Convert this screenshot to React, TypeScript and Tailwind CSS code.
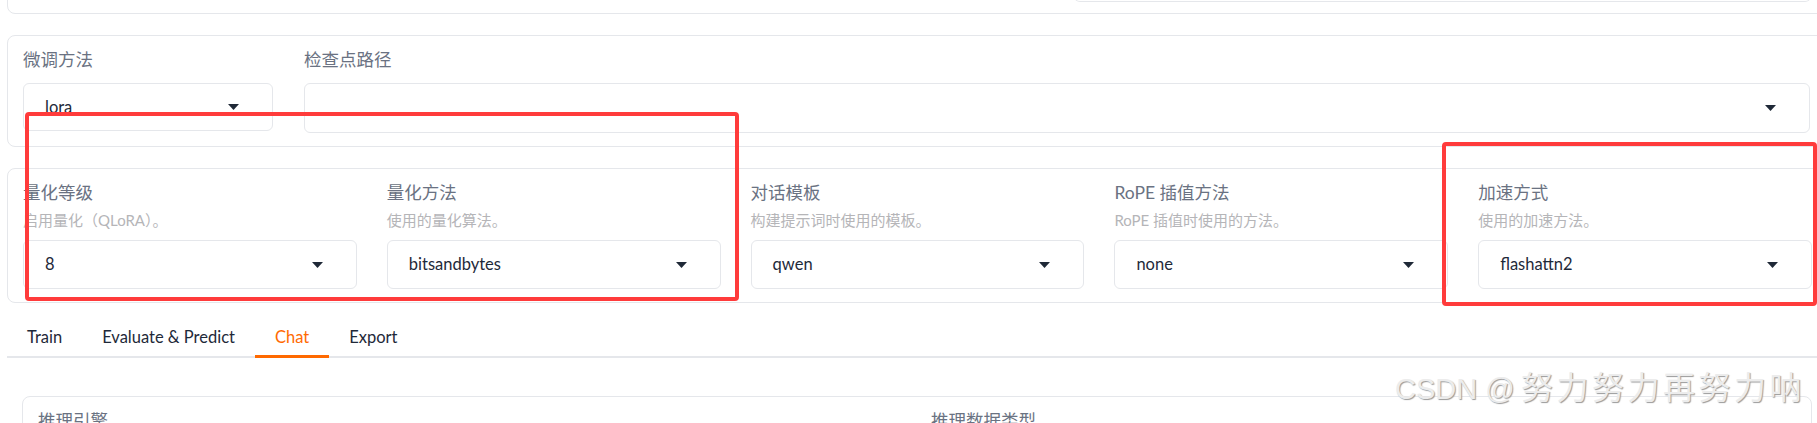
import React from 'react';

const FONT = { fontFamily: 'Lato, "Noto Sans CJK SC", sans-serif' };

// top row of the quantization / template settings card
const settings = [
  { label: '量化等级', info: '启用量化（QLoRA）。', value: '8' },
  { label: '量化方法', info: '使用的量化算法。', value: 'bitsandbytes' },
  { label: '对话模板', info: '构建提示词时使用的模板。', value: 'qwen' },
  { label: 'RoPE 插值方法', info: 'RoPE 插值时使用的方法。', value: 'none' },
  { label: '加速方式', info: '使用的加速方法。', value: 'flashattn2' },
];

const tabs = ['Train', 'Evaluate & Predict', 'Chat', 'Export'];

function Caret() {
  return (
    <svg width="11" height="6" viewBox="0 0 11 6" className="shrink-0">
      <path d="M0 0 L11 0 L5.5 6 Z" fill="#1f2937" />
    </svg>
  );
}

function Dropdown({ value, h = 'h-[49px]' }: { value: string; h?: string }) {
  return (
    <div className={`${h} w-full rounded-md border border-gray-200 bg-white flex items-center justify-between pl-[21px] pr-[33px]`}>
      <span className="text-[16.5px] text-gray-800">{value}</span>
      <Caret />
    </div>
  );
}

export default function App() {
  return (
    <div className="relative w-[1817px] h-[423px] overflow-hidden bg-white" style={FONT}>
      <div className="w-[1821px] ml-[7px] flex flex-col">
        {/* card cut off by the top edge */}
        <div className="-mt-4 h-[30px] rounded-lg border border-gray-200">
          <div className="ml-[1066px] w-[737px] h-[17px] rounded-b-md border-b border-gray-200" />
        </div>

        {/* finetuning method + checkpoint */}
        <div className="mt-[21px] rounded-lg border border-gray-200 pt-3 pb-[13px] px-[15px] flex gap-[31px]">
          <div className="w-[250px] flex flex-col">
            <div className="h-6 mb-[11px] flex items-center text-[17.5px] text-gray-500">微调方法</div>
            <Dropdown value="lora" h="h-12" />
          </div>
          <div className="flex-1 flex flex-col pr-[2px]">
            <div className="h-6 mb-[11px] flex items-center text-[17.5px] text-gray-500">检查点路径</div>
            <Dropdown value="" h="h-[50px]" />
          </div>
        </div>

        {/* quantization / template / rope / booster */}
        <div className="mt-[21px] rounded-lg border border-gray-200 pt-3 pb-[13px] px-[15px] grid grid-cols-5 gap-x-[30px]">
          {settings.map((s) => (
            <div key={s.label} className="flex flex-col">
              <div className="h-6 flex items-center text-[17.5px] text-gray-500 whitespace-nowrap">{s.label}</div>
              <div className="mt-[5px] h-5 flex items-center text-[15px] text-[#b5b5b8] whitespace-nowrap">{s.info}</div>
              <div className="mt-[10px]">
                <Dropdown value={s.value} />
              </div>
            </div>
          ))}
        </div>

        {/* tabs */}
        <div className="mt-[15px] flex border-b-2 border-gray-200">
          {tabs.map((t) => (
            <div
              key={t}
              className={`relative h-[38px] px-5 flex items-center text-[16.5px] ${t === 'Chat' ? 'text-orange-500' : 'text-gray-800'}`}
            >
              {t}
              {t === 'Chat' && <div className="absolute left-0 right-0 -bottom-[2px] h-[3px] bg-orange-500" />}
            </div>
          ))}
        </div>

        {/* chat panel (cut off at bottom) */}
        <div className="mt-[38px] ml-[15px] w-[1790px] h-[60px] rounded-lg border border-gray-200 pt-3 px-[15px] grid grid-cols-2 gap-x-[28px]">
          <div className="h-6 flex items-center text-[17.5px] text-gray-500">推理引擎</div>
          <div className="h-6 flex items-center text-[17.5px] text-gray-500">推理数据类型</div>
        </div>
      </div>

      {/* red annotation boxes */}
      <div className="absolute left-[25px] top-[112px] w-[714px] h-[189px] rounded-[4px] border-4 border-[#ff3b3b]" />
      <div className="absolute left-[1442px] top-[142px] w-[375px] h-[164px] rounded-[4px] border-4 border-[#ff3b3b]" />

      {/* watermark */}
      <div
        className="absolute left-[1395px] top-[370px] flex items-baseline leading-[36px] text-[#ececec] whitespace-nowrap [text-shadow:1px_1px_1px_#9a9a9a]"
        style={{ fontFamily: '"Liberation Sans", "Noto Sans CJK SC", sans-serif' }}
      >
        <span className="text-[29px] w-[126px] shrink-0">CSDN @</span>
        <span className="text-[32px] tracking-[3.5px]">努力努力再努力呐</span>
      </div>
    </div>
  );
}
